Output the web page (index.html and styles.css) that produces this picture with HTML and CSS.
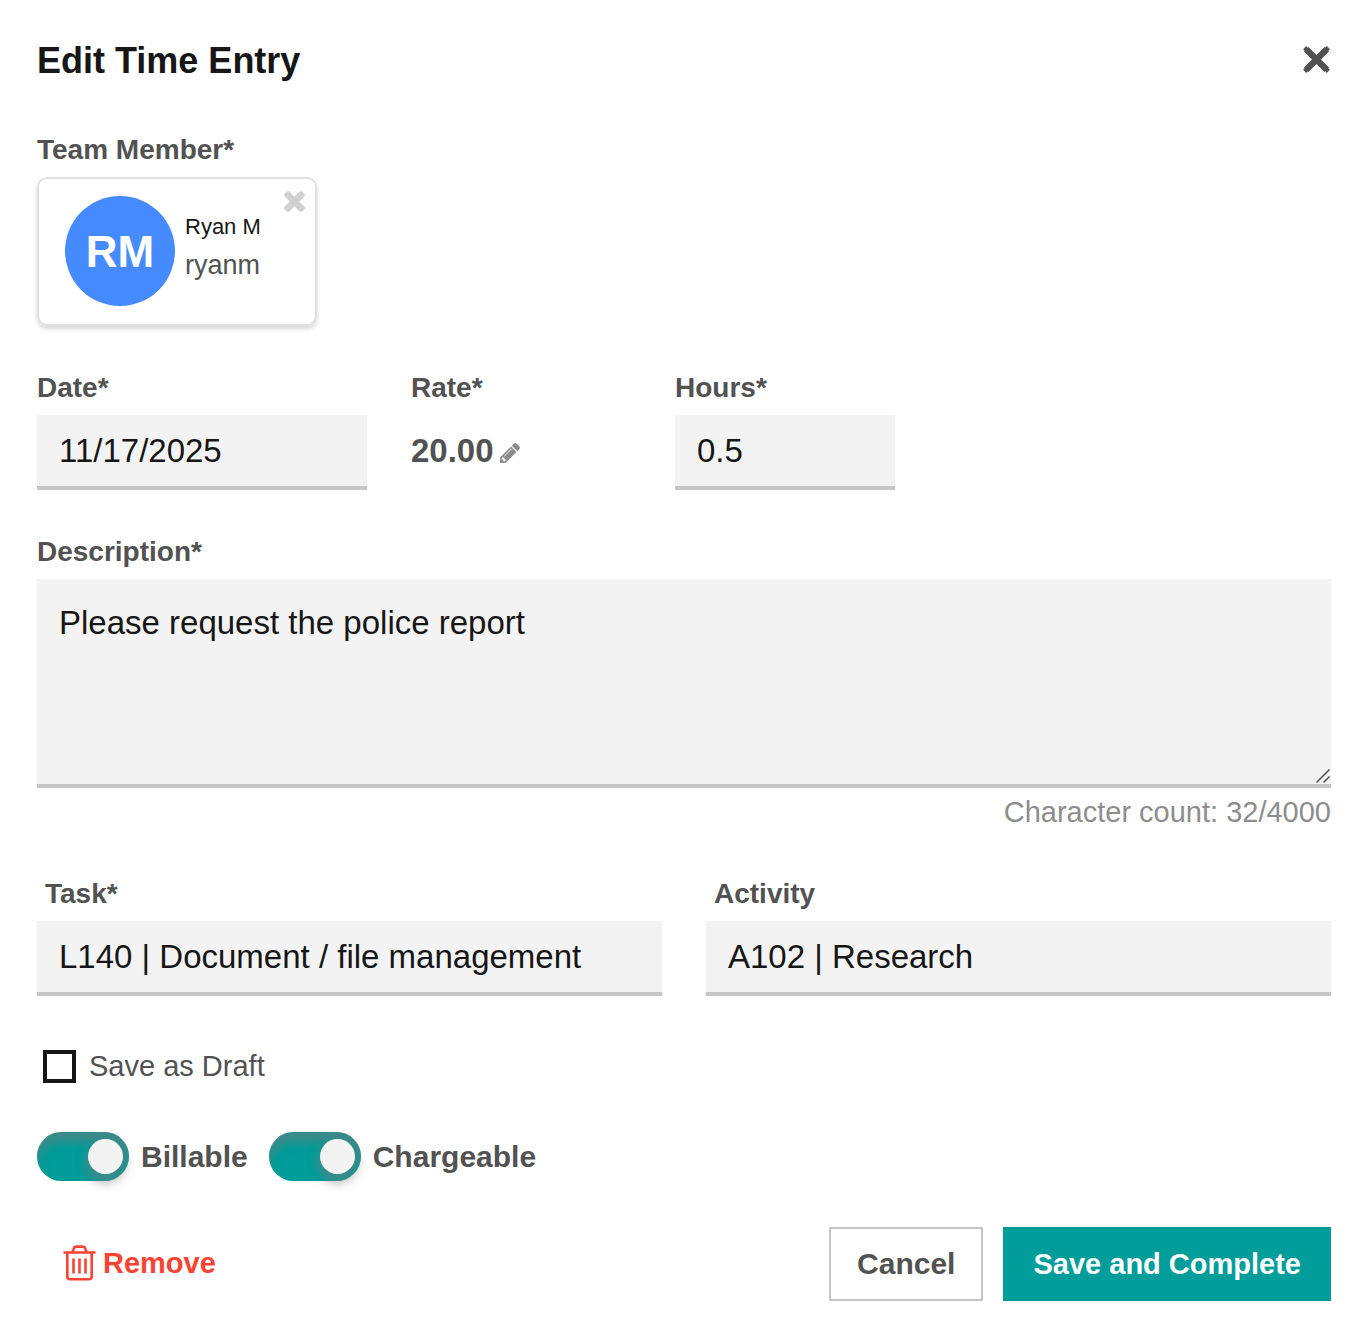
FILE: index.html
```html
<!DOCTYPE html>
<html lang="en">
<head>
<meta charset="utf-8">
<meta name="viewport" content="width=device-width, initial-scale=1">
<title>Edit Time Entry</title>
<link rel="stylesheet" href="styles.css">
</head>
<body>
<form class="entry">
  <header class="entry-header">
    <h1 class="entry-title">Edit Time Entry</h1>
    <button class="icon-button close" type="button" aria-label="Close">
      <svg width="28" height="28" viewBox="0 0 28 28"><path d="M3.2 3.200L23.800 23.800M23.800 3.200L3.200 23.800" stroke="currentColor" stroke-width="6.400"/><path d="M3.200 3.200L23.800 23.800M23.800 3.200L3.200 23.800" stroke="currentColor" stroke-width="4.400" stroke-linecap="square"/></svg>
    </button>
  </header>

  <section class="section">
    <h2 class="label">Team Member*</h2>
    <div class="member">
      <span class="avatar">RM</span>
      <div class="member-text">
        <span class="member-name">Ryan M</span>
        <span class="member-user">ryanm</span>
      </div>
      <button class="icon-button member-remove" type="button" aria-label="Remove team member">
        <svg width="21" height="21" viewBox="110 366 1188 1188"><path fill="currentColor" d="M1298 1322q0 40-28 68l-136 136q-28 28-68 28t-68-28l-294-294-294 294q-28 28-68 28t-68-28l-136-136q-28-28-28-68t28-68l294-294-294-294q-28-28-28-68t28-68l136-136q28-28 68-28t68 28l294 294 294-294q28-28 68-28t68 28l136 136q28 28 28 68t-28 68l-294 294 294 294q28 28 28 68z"/></svg>
      </button>
    </div>
  </section>

  <section class="section row">
    <div class="field field-date">
      <label class="label" for="date">Date*</label>
      <input class="input" id="date" type="text" value="11/17/2025">
    </div>
    <div class="field field-small">
      <h2 class="label">Rate*</h2>
      <div class="rate">
        <span>20.00</span>
        <button class="icon-button pencil" type="button" aria-label="Edit rate">
          <svg width="20" height="20" viewBox="128 149 1515 1515"><path fill="currentColor" d="M491 1536l91-91-235-235-91 91v107h128v128h107zm523-928q0-22-22-22-10 0-17 7l-542 542q-7 7-7 17 0 22 22 22 10 0 17-7l542-542q7-7 7-17zm-54-192l416 416-832 832h-416v-416zm683 96q0 53-37 90l-166 166-416-416 166-165q36-38 90-38 53 0 91 38l235 234q37 39 37 91z"/></svg>
        </button>
      </div>
    </div>
    <div class="field field-small">
      <label class="label" for="hours">Hours*</label>
      <input class="input" id="hours" type="text" value="0.5">
    </div>
  </section>

  <section class="section">
    <label class="label" for="description">Description*</label>
    <div class="textarea-wrap">
      <textarea class="input textarea" id="description">Please request the police report</textarea>
      <svg class="grip" width="15" height="15" viewBox="0 0 15 15"><path d="M0.500 13.500L13.500 0.500M7.500 13.500L13.500 7.500" stroke="#525252" stroke-width="1.500" fill="none"/></svg>
    </div>
    <p class="count">Character count: 32/4000</p>
  </section>

  <section class="section row">
    <div class="field field-grow">
      <label class="label label-inset" for="task">Task*</label>
      <input class="input" id="task" type="text" value="L140 | Document / file management">
    </div>
    <div class="field field-grow">
      <label class="label label-inset" for="activity">Activity</label>
      <input class="input" id="activity" type="text" value="A102 | Research">
    </div>
  </section>

  <section class="section options">
    <label class="draft"><input class="checkbox" type="checkbox">Save as Draft</label>
    <div class="toggles">
      <label class="toggle"><input class="switch" type="checkbox" checked>Billable</label>
      <label class="toggle"><input class="switch" type="checkbox" checked>Chargeable</label>
    </div>
  </section>

  <footer class="actions">
    <button class="remove" type="button">
      <svg width="33" height="36" viewBox="0 0 33 36" fill="none" stroke="currentColor"><path stroke-width="2.600" d="M0.500 7.500H32.500M4.300 7.500V31.500Q4.300 34.300 7 34.300H26Q28.700 34.300 28.700 31.500V7.500M9.500 7L10.600 3.800Q11.300 1.600 13.500 1.600H19.500Q21.700 1.600 22.400 3.800L23.500 7"/><path stroke-width="2.600" d="M10.500 13.500V28.500M16.500 13.500V28.500M22.500 13.500V28.500"/></svg>
      Remove
    </button>
    <button class="button cancel" type="button">Cancel</button>
    <button class="button save" type="submit">Save and Complete</button>
  </footer>
</form>
</body>
</html>
```

FILE: styles.css
```css
* { box-sizing: border-box; }

body {
  margin: 0;
  background: #fff;
  color: #525252;
  font-family: "Liberation Sans", Arial, sans-serif;
}

button, input, textarea { font-family: inherit; }
button { cursor: pointer; }
svg { display: block; }

.entry { padding: 34px 35px 29px 37px; }

.entry-header {
  display: flex;
  justify-content: space-between;
  align-items: center;
}

.entry-title {
  margin: 0;
  color: #161616;
  font-size: 36px;
  line-height: 54px;
}

.icon-button {
  padding: 0;
  border: 0;
  background: none;
  color: #525252;
}
.close { padding-bottom: 2px; }

.section { margin-top: 43px; }

.label {
  display: block;
  margin: 0 0 8px;
  font-size: 28px;
  font-weight: bold;
  line-height: 38px;
}
.label-inset { padding-left: 8px; }

/* Team member card */
.member {
  display: flex;
  gap: 10px;
  position: relative;
  width: 280px;
  height: 149px;
  padding: 17px 0 0 26px;
  border: 2px solid #e0e0e0;
  border-radius: 10px;
  box-shadow: 0 3px 4px rgba(0, 0, 0, .16);
}
.avatar {
  width: 110px;
  height: 110px;
  border-radius: 50%;
  background: #458bff;
  color: #fff;
  font-size: 44px;
  font-weight: bold;
  line-height: 112px;
  text-align: center;
}
.member-text {
  display: flex;
  flex-direction: column;
  padding-top: 12px;
  line-height: 38px;
}
.member-name { color: #161616; font-size: 22px; }
.member-user { font-size: 27px; }
.member-remove {
  position: absolute;
  top: 12px;
  right: 10px;
  color: #d0d0d0;
}

/* Fields */
.row { display: flex; gap: 44px; }
.field { min-width: 0; }
.field-date { width: 330px; }
.field-small { width: 220px; }
.field-grow { flex: 1; }

.input {
  display: block;
  width: 100%;
  height: 75px;
  padding: 0 22px;
  border: 0;
  border-bottom: 4px solid #c6c6c6;
  border-radius: 0;
  background: #f3f3f3;
  color: #161616;
  font-size: 33px;
}

.rate {
  display: flex;
  align-items: center;
  gap: 6px;
  font-size: 33px;
  font-weight: bold;
  line-height: 71px;
}
.pencil { padding-top: 4px; color: #8d8d8d; }

.textarea-wrap { position: relative; }
.textarea {
  height: 209px;
  padding: 22px;
  line-height: 44px;
  resize: none;
}
.grip {
  position: absolute;
  right: 0;
  bottom: 4px;
}
.count {
  margin: 4px 0 0;
  color: #8d8d8d;
  font-size: 29px;
  line-height: 40px;
  text-align: right;
}

/* Options */
.options {
  display: flex;
  flex-direction: column;
  gap: 39px;
}
.draft {
  display: flex;
  align-items: center;
  gap: 13px;
  padding-left: 6px;
  font-size: 29px;
  line-height: 54px;
}
.checkbox {
  appearance: none;
  width: 33px;
  height: 33px;
  margin: 0;
  border: 4px solid #161616;
}
.checkbox:checked { background: #161616; }

.toggles { display: flex; gap: 21px; }
.toggle {
  display: flex;
  align-items: center;
  gap: 12px;
  font-size: 30px;
  font-weight: bold;
}
.switch {
  appearance: none;
  display: flex;
  align-items: center;
  width: 92px;
  height: 49px;
  margin: 0;
  padding: 0 6px;
  border-radius: 25px;
  background: #8d8d8d;
  box-shadow: inset 0 10px 10px rgba(120, 120, 120, .5);
}
.switch:checked { justify-content: flex-end; background: #009d9a; }
.switch::before {
  content: "";
  width: 35px;
  height: 35px;
  border-radius: 50%;
  background: #f3f3f3;
  box-shadow: 0 6px 10px 3px rgba(120, 120, 120, .5);
}

/* Actions */
.actions {
  display: flex;
  align-items: center;
  gap: 20px;
  margin-top: 46px;
}
.remove {
  display: flex;
  align-items: center;
  gap: 7px;
  margin-right: auto;
  padding: 0 26px 2px;
  border: 0;
  background: none;
  color: #fa4333;
  font-size: 29px;
  font-weight: bold;
}
.button {
  height: 74px;
  padding: 0 26px;
  border: 2px solid #c6c6c6;
  background: #fff;
  color: #525252;
  font-size: 30px;
  font-weight: bold;
}
.save {
  padding: 0 28px;
  border-color: #009d9a;
  background: #009d9a;
  color: #fff;
  font-size: 29px;
}
```
